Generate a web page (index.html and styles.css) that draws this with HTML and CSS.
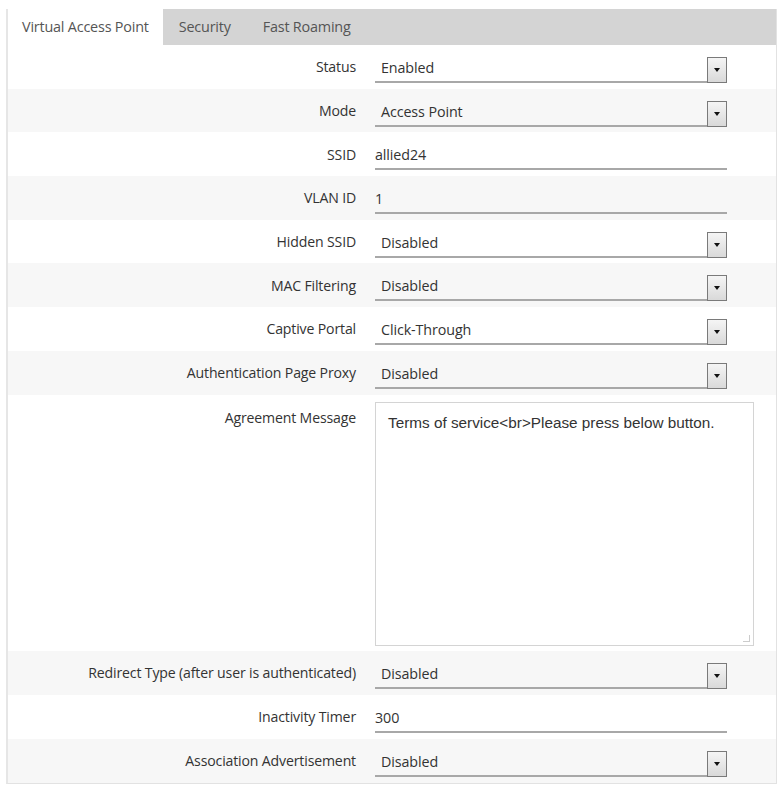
FILE: index.html
```html
<!DOCTYPE html>
<html lang="en">

<head>
    <meta charset="UTF-8">
    <title>Virtual Access Point</title>
    <link rel="stylesheet" href="styles.css">
</head>

<body>
    <div id="panel">
        <div class="tabs">
            <div class="tab active">Virtual Access Point</div>
            <div class="tab">Security</div>
            <div class="tab">Fast Roaming</div>
        </div>
        <div class="form">
            <div class="row">
                <label>Status</label>
                <div class="select"><span class="val">Enabled</span><span class="arrow"></span></div>
            </div>
            <div class="row alt">
                <label>Mode</label>
                <div class="select"><span class="val">Access Point</span><span class="arrow"></span></div>
            </div>
            <div class="row">
                <label>SSID</label>
                <div class="text">allied24</div>
            </div>
            <div class="row alt">
                <label>VLAN ID</label>
                <div class="text">1</div>
            </div>
            <div class="row">
                <label>Hidden SSID</label>
                <div class="select"><span class="val">Disabled</span><span class="arrow"></span></div>
            </div>
            <div class="row alt">
                <label>MAC Filtering</label>
                <div class="select"><span class="val">Disabled</span><span class="arrow"></span></div>
            </div>
            <div class="row">
                <label>Captive Portal</label>
                <div class="select"><span class="val">Click-Through</span><span class="arrow"></span></div>
            </div>
            <div class="row alt">
                <label>Authentication Page Proxy</label>
                <div class="select"><span class="val">Disabled</span><span class="arrow"></span></div>
            </div>
            <div class="row tall">
                <label>Agreement Message</label>
                <div class="textarea">Terms of service&lt;br&gt;Please press below button.<span class="grip"></span></div>
            </div>
            <div class="row alt bottom">
                <label>Redirect Type (after user is authenticated)</label>
                <div class="select"><span class="val">Disabled</span><span class="arrow"></span></div>
            </div>
            <div class="row bottom">
                <label>Inactivity Timer</label>
                <div class="text">300</div>
            </div>
            <div class="row alt bottom">
                <label>Association Advertisement</label>
                <div class="select"><span class="val">Disabled</span><span class="arrow"></span></div>
            </div>
        </div>
    </div>
</body>

</html>
```

FILE: styles.css
```css
body {
    margin: 0;
    padding: 0;
    font-family: 'Open Sans', 'Noto Sans', sans-serif;
    font-size: 14.1px;
    color: #333;
    background: #fff;
}

#panel {
    margin: 9px 4px 0 6px;
    border: 1px solid #e2e2e2;
    border-left: 2px solid #e6e6e6;
    border-top: none;
}

.tabs {
    display: flex;
    height: 36px;
    background-color: #d4d4d4;
}

.tab {
    padding: 0 16px;
    line-height: 36px;
    color: #555;
    font-size: 14.4px;
    letter-spacing: -0.2px;
}

.tab.active {
    background-color: #fff;
    padding: 0 14px;
}

.row {
    display: grid;
    grid-template-columns: 348px 352px;
    column-gap: 19px;
    align-items: center;
    height: 43.7px;
}

.row.bottom {
    height: 44px;
}

.row.alt {
    background-color: #f7f7f7;
}

.row label {
    text-align: right;
    letter-spacing: -0.15px;
}

.row.tall {
    height: 256px;
    align-items: start;
}

.row.tall label {
    padding-top: 13px;
}

.select {
    display: flex;
    align-items: flex-end;
    height: 26px;
    margin-top: 6px;
}

.select .val {
    flex: 1;
    height: 24px;
    line-height: 22px;
    padding-left: 6px;
    border-bottom: 2px solid #a8a8a8;
    font-size: 14.3px;
    letter-spacing: -0.1px;
}

.arrow {
    width: 18px;
    height: 24px;
    border: 1px solid #7a7a7a;
    background: linear-gradient(#f5f5f5, #d9d9d9);
    display: flex;
    align-items: center;
    justify-content: center;
}

.arrow::after {
    content: "";
    border-left: 3px solid transparent;
    border-right: 3px solid transparent;
    border-top: 4px solid #111;
}

.text {
    height: 24px;
    line-height: 22px;
    margin-top: 6px;
    border-bottom: 2px solid #a8a8a8;
    font-size: 14.3px;
    letter-spacing: -0.1px;
}

.textarea {
    position: relative;
    box-sizing: border-box;
    width: 379px;
    height: 244px;
    margin-top: 7px;
    border: 1px solid #d4d4d4;
    padding: 11px 12px;
    font-family: 'Liberation Sans', Arial, sans-serif;
    font-size: 15.3px;
    color: #333;
}

.grip {
    position: absolute;
    right: 3px;
    bottom: 3px;
    width: 6px;
    height: 6px;
    border-right: 1px solid #ccc;
    border-bottom: 1px solid #ccc;
}
```
